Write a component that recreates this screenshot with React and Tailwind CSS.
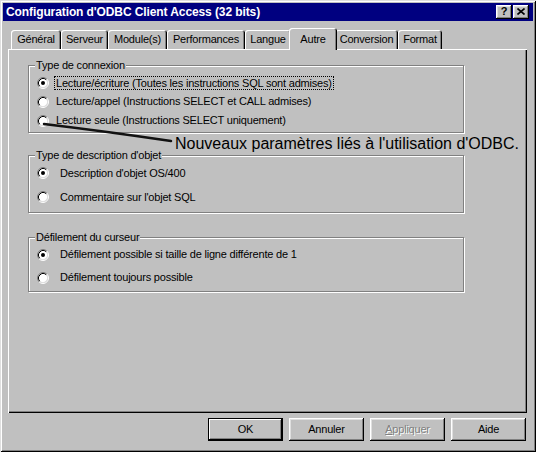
import React from 'react';

// Win95 style bevels
const raised =
  'shadow-[inset_-1px_-1px_0_#000,inset_1px_1px_0_#fff,inset_-2px_-2px_0_#808080,inset_2px_2px_0_#dfdfdf]';

const tabs = [
  { label: 'Général', w: 'w-[50px]' },
  { label: 'Serveur', w: 'w-[47px]' },
  { label: 'Module(s)', w: 'w-[59px]' },
  { label: 'Performances', w: 'w-[78px]' },
  { label: 'Langue', w: 'w-[46px]' },
  { label: 'Autre', w: 'w-[48px]', active: true },
  { label: 'Conversion', w: 'w-[63px]' },
  { label: 'Format', w: 'w-[44px]' },
];

function Radio({ checked }) {
  return (
    <svg width="12" height="12" viewBox="0 0 12 12" className="shrink-0">
      <circle cx="6" cy="6" r="4.5" fill="#fff" />
      <path d="M2.11 9.89 A5.5 5.5 0 0 1 9.89 2.11" fill="none" stroke="#808080" />
      <path d="M9.89 2.11 A5.5 5.5 0 0 1 2.11 9.89" fill="none" stroke="#fff" />
      <path d="M2.82 9.18 A4.5 4.5 0 0 1 9.18 2.82" fill="none" stroke="#000" />
      <path d="M9.18 2.82 A4.5 4.5 0 0 1 2.82 9.18" fill="none" stroke="#dfdfdf" />
      {checked && <circle cx="6" cy="6" r="2" fill="#000" />}
    </svg>
  );
}

function GroupBox({ title, className, children }) {
  return (
    <div
      className={`relative w-[436px] border border-[#808080] shadow-[1px_1px_0_#fff,inset_1px_1px_0_#fff] ${className}`}
    >
      {/* legend sits over the etched top line */}
      <span className="absolute left-[6px] top-[-8px] bg-[#c0c0c0] px-[1px] leading-[14px]">
        {title}
      </span>
      {children}
    </div>
  );
}

function Option({ checked, children, gap = 'gap-[5px]', h }) {
  return (
    <div className={`flex items-center pl-[8px] ${gap} ${h}`}>
      <Radio checked={checked} />
      {children}
    </div>
  );
}

function Button({ children, isDefault, disabled }) {
  return (
    <div
      className={`flex h-[23px] w-[75px] items-center justify-center ${
        isDefault
          ? 'shadow-[inset_0_0_0_1px_#000,inset_-2px_-2px_0_#000,inset_2px_2px_0_#fff,inset_-3px_-3px_0_#808080]'
          : raised
      } ${disabled ? 'text-[#808080] [text-shadow:1px_1px_0_#fff]' : ''}`}
    >
      {children}
    </div>
  );
}

export default function App() {
  return (
    <div className="h-[452px] w-[536px] bg-[#c0c0c0] p-[3px] font-['Liberation_Sans',Arial,sans-serif] text-[11px] tracking-[-0.2px] text-black shadow-[inset_1px_1px_0_#dfdfdf,inset_-1px_-1px_0_#000,inset_2px_2px_0_#fff,inset_-2px_-2px_0_#808080]">
      {/* Title bar */}
      <div className="flex h-[18px] items-center justify-between bg-[#000080] pl-[3px] pr-[4px]">
        <span className="text-[12px] font-bold tracking-[-0.1px] text-white">
          Configuration d'ODBC Client Access (32 bits)
        </span>
        <div className="flex gap-[1px]">
          <div className={`flex h-[14px] w-[16px] items-center justify-center bg-[#c0c0c0] pb-[1px] text-[11px] font-bold leading-none text-black ${raised}`}>
            ?
          </div>
          <div className={`flex h-[14px] w-[16px] items-center justify-center bg-[#c0c0c0] pb-[1px] ${raised}`}>
            <svg width="8" height="7" viewBox="0 0 8 7">
              <path d="M0.5 0.5 L7.5 6.5 M7.5 0.5 L0.5 6.5" stroke="#000" strokeWidth="1.6" />
            </svg>
          </div>
        </div>
      </div>

      {/* Tabs */}
      <div className="mt-[7px] flex h-[21px] items-end pl-[8px]">
        {tabs.map((t) =>
          t.active ? (
            <div
              key={t.label}
              className={`relative z-10 -mx-[2px] -mb-[1px] flex h-[22px] items-start justify-center rounded-t-[3px] bg-[#c0c0c0] pt-[3px] shadow-[inset_1px_1px_0_#fff,inset_-1px_0_0_#000,inset_-2px_0_0_#808080] ${t.w}`}
            >
              {t.label}
            </div>
          ) : (
            <div
              key={t.label}
              className={`flex h-[19px] items-center justify-center rounded-t-[3px] pb-[1px] shadow-[inset_1px_1px_0_#fff,inset_-1px_0_0_#000,inset_-2px_0_0_#808080] ${t.w}`}
            >
              {t.label}
            </div>
          )
        )}
      </div>

      {/* Tab page */}
      <div className="relative ml-[5px] flex h-[364px] w-[519px] flex-col pl-[20px] pt-[16px] shadow-[inset_1px_1px_0_#fff,inset_-1px_-1px_0_#000,inset_-2px_-2px_0_#808080]">
        <GroupBox title="Type de connexion" className="h-[68px] pt-[7px]">
          <Option checked h="h-[19px]">
            <span className="border border-dotted border-black px-[1px] leading-[12px]">
              Lecture/écriture (Toutes les instructions SQL sont admises)
            </span>
          </Option>
          <Option h="h-[19px]">
            <span className="pl-[2px]">Lecture/appel (Instructions SELECT et CALL admises)</span>
          </Option>
          <Option h="h-[19px]">
            <span className="pl-[2px]">Lecture seule (Instructions SELECT uniquement)</span>
          </Option>
        </GroupBox>

        <div className="flex h-[22px] items-center pl-[147px] text-[16px] leading-[22px] tracking-normal">
          Nouveaux paramètres liés à l'utilisation d'ODBC.
        </div>

        <GroupBox title="Type de description d'objet" className="h-[58px] pt-[5px]">
          <Option checked gap="gap-[11px]" h="h-[24px]">
            <span>Description d'objet OS/400</span>
          </Option>
          <Option gap="gap-[11px]" h="h-[24px]">
            <span>Commentaire sur l'objet SQL</span>
          </Option>
        </GroupBox>

        <GroupBox title="Défilement du curseur" className="mt-[24px] h-[55px] pt-[5px]">
          <Option checked gap="gap-[11px]" h="h-[23px]">
            <span>Défilement possible si taille de ligne différente de 1</span>
          </Option>
          <Option gap="gap-[11px]" h="h-[23px]">
            <span>Défilement toujours possible</span>
          </Option>
        </GroupBox>

        {/* hand-drawn pointer from the third option to the note */}
        <svg className="absolute left-0 top-0" width="200" height="110">
          <path d="M36 75 Q 95 82 163 92" fill="none" stroke="#111" strokeWidth="2.5" strokeLinecap="round" />
        </svg>
      </div>

      {/* Dialog buttons */}
      <div className="mt-[5px] flex justify-end gap-[6px] pr-[7px]">
        <Button isDefault>OK</Button>
        <Button>Annuler</Button>
        <Button disabled>
          <span>
            <span className="underline">A</span>ppliquer
          </span>
        </Button>
        <Button>Aide</Button>
      </div>
    </div>
  );
}
